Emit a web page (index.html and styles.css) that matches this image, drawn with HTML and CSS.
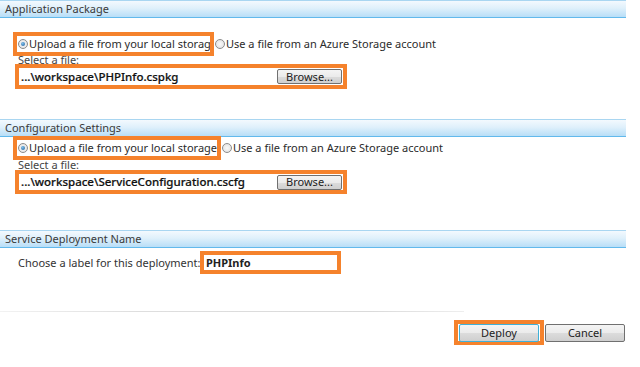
FILE: index.html
```html
<!DOCTYPE html>
<html>
<head>
<meta charset="utf-8">
<link rel="stylesheet" href="styles.css">
</head>
<body>
<div class="page">
  <section class="sec sec-pkg">
    <div class="head">Application Package</div>
    <div class="radios">
      <div class="hl hl-r1"><span class="radio on"></span><span class="lbl">Upload a file from your local storage</span></div>
      <div class="opt"><span class="radio"></span><span class="lbl">Use a file from an Azure Storage account</span></div>
    </div>
    <div class="sel">Select a file:</div>
    <div class="hl hl-file">
      <div class="path">...\workspace\PHPInfo.cspkg</div>
      <button class="btn browse">Browse...</button>
    </div>
  </section>

  <section class="sec sec-cfg">
    <div class="head">Configuration Settings</div>
    <div class="radios">
      <div class="hl hl-r2"><span class="radio on"></span><span class="lbl">Upload a file from your local storage</span></div>
      <div class="opt"><span class="radio"></span><span class="lbl">Use a file from an Azure Storage account</span></div>
    </div>
    <div class="sel">Select a file:</div>
    <div class="hl hl-file">
      <div class="path">...\workspace\ServiceConfiguration.cscfg</div>
      <button class="btn browse">Browse...</button>
    </div>
  </section>

  <section class="sec sec-name">
    <div class="head">Service Deployment Name</div>
    <div class="name-row">
      <span class="name-lbl">Choose a label for this deployment:</span>
      <div class="hl hl-name"><div class="name-val">PHPInfo</div></div>
    </div>
  </section>

  <div class="sep"></div>

  <div class="actions">
    <div class="hl hl-deploy"><button class="btn act deploy">Deploy</button></div>
    <button class="btn act cancel">Cancel</button>
  </div>
</div>
</body>
</html>
```

FILE: styles.css
```css
* { box-sizing: border-box; }
html, body { margin: 0; padding: 0; background: #fff; }
body {
  font-family: "Noto Sans", "Open Sans", sans-serif;
  font-size: 11px;
  color: #2b2b2b;
  width: 640px;
  height: 367px;
  overflow: hidden;
}
.page { display: flex; flex-direction: column; }

.head {
  width: 626px;
  height: 18px;
  padding-left: 5px;
  line-height: 15px;
  color: #3a3a3a;
  border-top: 1px solid #a9d6f1;
  border-bottom: 1px solid #62b9ec;
  background: linear-gradient(#f3f9fe 0%, #dff0fb 45%, #b8def7 100%);
  white-space: nowrap;
}

.hl { border: 4px solid #f5822c; background: #fff; }

.radios { display: flex; align-items: center; }
.sec-pkg .radios { margin-top: 14px; }
.sec-cfg .radios { margin-top: -1px; }

.hl-r1, .hl-r2 {
  margin-left: 13px;
  height: 24px;
  display: flex;
  align-items: center;
  overflow: hidden;
  white-space: nowrap;
  padding-left: 1px;
}
.hl-r1 { width: 201px; }
.hl-r2 { width: 208px; }

.opt { display: flex; align-items: center; white-space: nowrap; margin-left: 1px; }

.radio {
  display: inline-block;
  width: 10px;
  height: 10px;
  border-radius: 50%;
  border: 1px solid #8c8c8c;
  background: radial-gradient(circle, #fafafa 0%, #dedede 100%);
  margin-right: 1px;
  flex: none;
  position: relative;
}
.radio.on::after {
  content: "";
  position: absolute;
  left: 2px; top: 2px;
  width: 4px; height: 4px;
  border-radius: 50%;
  background: radial-gradient(circle at 40% 35%, #7fc0ea, #1d5c9c);
}
.lbl { line-height: 14px; }

.sel {
  margin-left: 18px;
  height: 8px;
  line-height: 10px;
  color: #444;
  overflow: visible;
}

.hl-file {
  margin-left: 15px;
  width: 332px;
  height: 25px;
  display: flex;
  align-items: center;
}
.sec-pkg .sel { margin-top: -1px; }
.sec-pkg .hl-file { margin-top: 1px; }
.sec-cfg .hl-file { height: 24px; margin-top: 2px; }

.path {
  flex: 1;
  padding-left: 2px;
  font-size: 11.5px;
  font-weight: 500;
  color: #111;
  line-height: 14px;
  white-space: nowrap;
  -webkit-text-stroke: 0.2px #111;
}

.btn {
  font-family: inherit;
  font-size: 11px;
  color: #222;
  border: 1px solid #707070;
  border-radius: 2px;
  background: linear-gradient(#f4f4f4 0%, #ebebeb 50%, #dcdcdc 51%, #cfcfcf 100%);
  padding: 0;
  line-height: 12px;
}
.browse {
  width: 65px;
  height: 15px;
  margin-right: 1px;
}

.sec-cfg { margin-top: 30px; }
.sec-name { margin-top: 36px; }

.name-row { display: flex; align-items: center; margin-top: 3px; }
.name-lbl { margin-left: 18px; color: #333; width: 182px; white-space: nowrap; }
.hl-name { width: 141px; height: 23px; display: flex; align-items: center; }
.name-val { padding-left: 2px; font-weight: 700; color: #222; }

.sep {
  margin-top: 37px;
  width: 464px;
  height: 1px;
  background: linear-gradient(90deg, #f2f2f2 0%, #dedede 30%, #dadada 80%, #eeeeee 100%);
}

.actions {
  display: flex;
  align-items: center;
  margin-top: 8px;
  margin-left: 454px;
}
.hl-deploy {
  width: 90px;
  height: 25px;
  display: flex;
  align-items: center;
  justify-content: center;
}
.act { width: 80px; height: 18px; font-size: 11px; }
.deploy { border-color: #3fb0d8; }
.cancel { margin-left: 1px; }
```
